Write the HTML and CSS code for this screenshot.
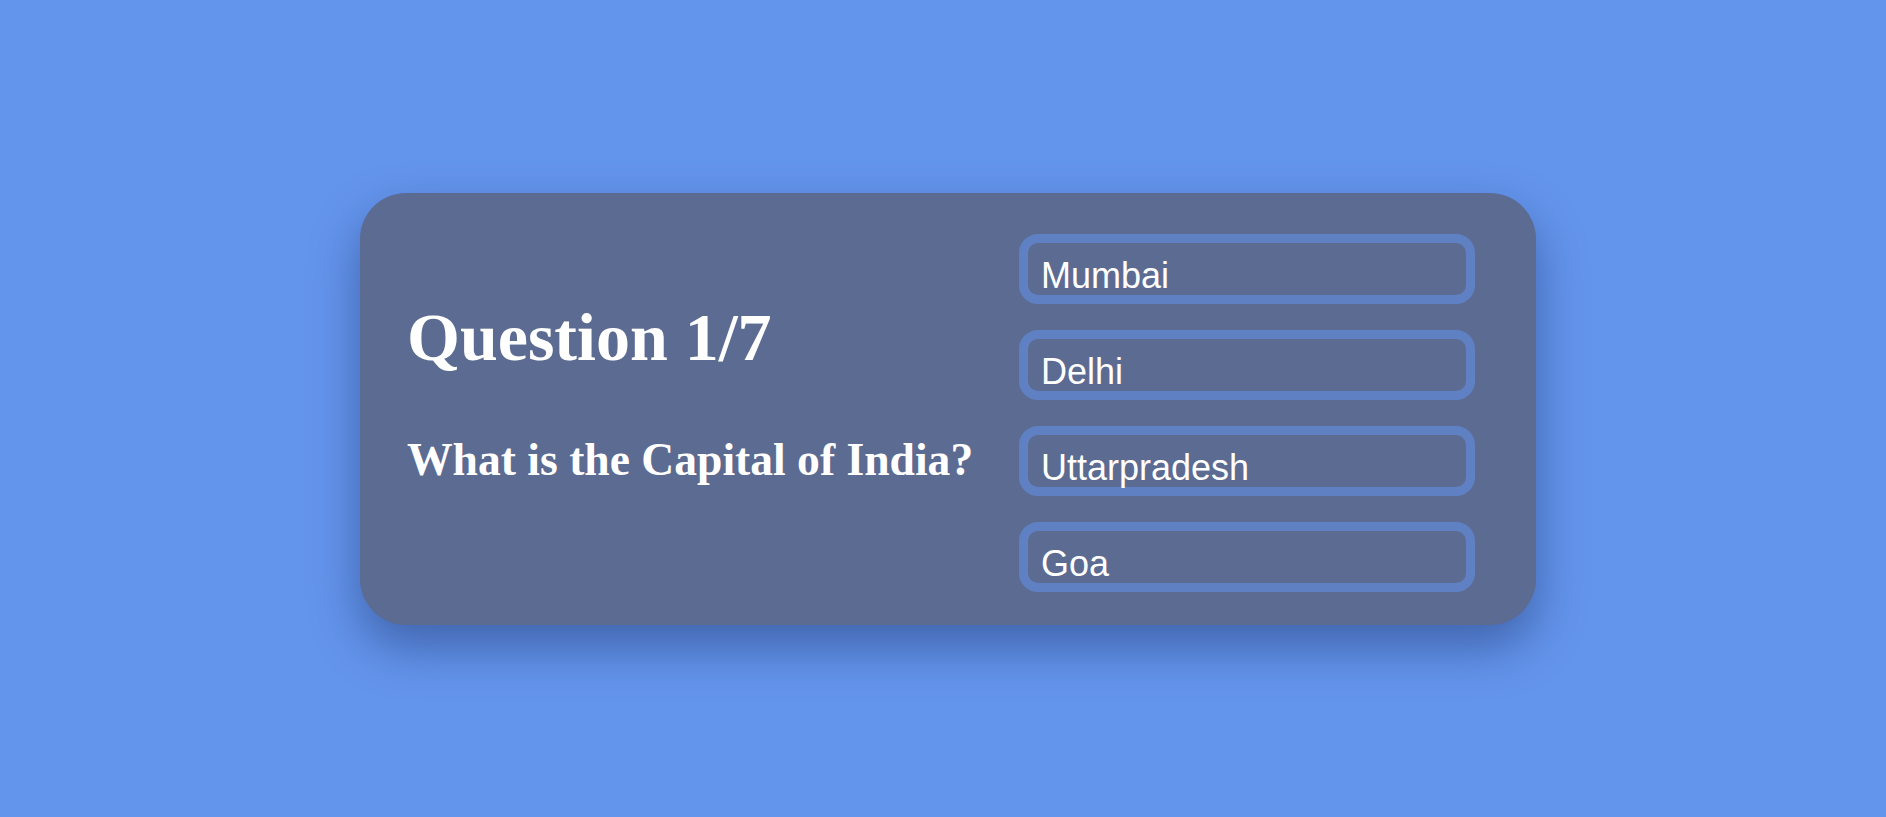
FILE: index.html
```html
<!DOCTYPE html>
<html lang="en">
<head>
<meta charset="utf-8">
<title>Quiz</title>
<link rel="stylesheet" href="styles.css">
</head>
<body>
<main class="page">
  <section class="quiz-card">
    <div class="question-section">
      <div class="question-count">Question 1/7</div>
      <div class="question-text">What is the Capital of India?</div>
    </div>
    <div class="answer-section">
      <button class="answer">Mumbai</button>
      <button class="answer">Delhi</button>
      <button class="answer">Uttarpradesh</button>
      <button class="answer">Goa</button>
    </div>
  </section>
</main>
</body>
</html>
```
FILE: styles.css
```css
html, body {
  margin: 0;
  padding: 0;
  height: 100%;
}
body {
  background: #6495ed;
  font-family: "Liberation Serif", "Times New Roman", serif;
  overflow: hidden;
}
.page {
  height: 100%;
  display: flex;
  align-items: center;
  justify-content: center;
  padding-left: 10px;
  box-sizing: border-box;
}
.quiz-card {
  width: 1176px;
  height: 432px;
  box-sizing: border-box;
  background: #5c6b92;
  border-radius: 46px;
  padding: 41px 61px 32px 47px;
  display: flex;
  box-shadow: 0 22px 50px rgba(20, 40, 90, 0.45);
}
.question-section {
  flex: 1;
  padding-top: 65px;
  color: #ffffff;
  font-weight: bold;
}
.question-count {
  font-size: 68px;
  line-height: 76px;
}
.question-text {
  margin-top: 59px;
  font-size: 45.6px;
  line-height: 51px;
  white-space: nowrap;
}
.answer-section {
  width: 456px;
  display: flex;
  flex-direction: column;
  gap: 26px;
}
.answer {
  height: 70px;
  box-sizing: border-box;
  margin: 0;
  border: 9px solid #5f80c2;
  border-radius: 19px;
  background: #5c6b92;
  color: #ffffff;
  font-family: "Liberation Sans", Arial, sans-serif;
  font-size: 36px;
  line-height: 40px;
  text-align: left;
  padding: 13px 13px 0;
  display: flex;
  align-items: flex-start;
  cursor: pointer;
}
```
